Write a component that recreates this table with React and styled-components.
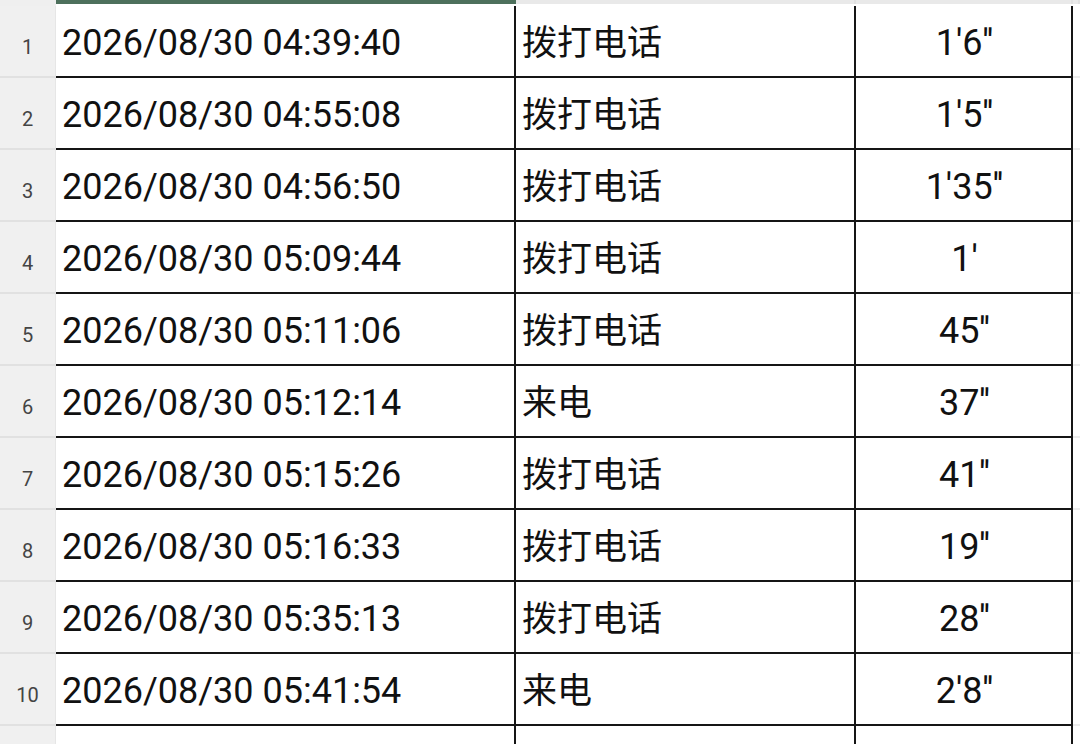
import styled, { createGlobalStyle, css } from 'styled-components';

const GlobalStyle = createGlobalStyle`
  html, body {
    margin: 0;
    padding: 0;
    background: #ffffff;
    overflow: hidden;
  }
`;

const calls = [
  { time: '2026/08/30 04:39:40', type: '拨打电话', duration: `1'6''` },
  { time: '2026/08/30 04:55:08', type: '拨打电话', duration: `1'5''` },
  { time: '2026/08/30 04:56:50', type: '拨打电话', duration: `1'35''` },
  { time: '2026/08/30 05:09:44', type: '拨打电话', duration: `1'` },
  { time: '2026/08/30 05:11:06', type: '拨打电话', duration: `45''` },
  { time: '2026/08/30 05:12:14', type: '来电', duration: `37''` },
  { time: '2026/08/30 05:15:26', type: '拨打电话', duration: `41''` },
  { time: '2026/08/30 05:16:33', type: '拨打电话', duration: `19''` },
  { time: '2026/08/30 05:35:13', type: '拨打电话', duration: `28''` },
  { time: '2026/08/30 05:41:54', type: '来电', duration: `2'8''` },
];

const COLUMNS = '56px 460px 340px 217px 1fr';

const Sheet = styled.div`
  width: 1080px;
  height: 744px;
  overflow: hidden;
  font-family: Roboto, 'Noto Sans CJK SC', sans-serif;
  color: #111;
`;

const HeaderStrip = styled.div`
  display: grid;
  grid-template-columns: ${COLUMNS};
  align-items: start;
  height: 6px;
`;

const HeaderCell = styled.div`
  height: 4px;
  background: #e9e9e9;
  border-right: 2px solid #e0e0e0;
  ${p =>
    p.$selected &&
    css`
      background: #4d705c;
      border-right-color: #4d705c;
    `}
  ${p =>
    p.$corner &&
    css`
      height: 6px;
      background: #efefef;
      border-right: none;
    `}
`;

const Row = styled.div`
  display: grid;
  grid-template-columns: ${COLUMNS};
  height: 72px;
`;

const RowNumber = styled.div`
  display: flex;
  align-items: flex-end;
  justify-content: center;
  padding-bottom: 19px;
  box-sizing: border-box;
  background: #f0f0f0;
  border-bottom: 2px solid #e1e1e1;
  border-right: 1px solid #e6e6e6;
  font-size: 20px;
  line-height: 20px;
  color: #444;
`;

const Cell = styled.div`
  display: flex;
  align-items: center;
  box-sizing: border-box;
  padding: 3px 6px 0;
  border-bottom: 2px solid #151515;
  border-right: 2px solid #151515;
  font-size: 36px;
  white-space: nowrap;
  overflow: hidden;

  ${p =>
    p.$center &&
    css`
      justify-content: center;
      padding-right: 4px;
    `}
  ${p =>
    p.$cjk &&
    css`
      padding-top: 0;
      padding-bottom: 3px;
      font-family: 'Noto Sans CJK SC', sans-serif;
      font-size: 35px;
    `}
  ${p =>
    p.$empty &&
    css`
      border-bottom-color: #ececec;
      border-right: none;
    `}
  ${p =>
    p.$blank &&
    css`
      border-bottom: none;
    `}
`;

function CallRow({ index, call }) {
  return (
    <Row>
      <RowNumber>{index}</RowNumber>
      {call ? (
        <>
          <Cell>{call.time}</Cell>
          <Cell $cjk>{call.type}</Cell>
          <Cell $center>{call.duration}</Cell>
        </>
      ) : (
        <>
          <Cell $blank />
          <Cell $blank />
          <Cell $blank />
        </>
      )}
      <Cell $empty $blank={!call} />
    </Row>
  );
}

export default function App() {
  return (
    <>
      <GlobalStyle />
      <Sheet>
        <HeaderStrip>
          <HeaderCell $corner />
          <HeaderCell $selected />
          <HeaderCell />
          <HeaderCell />
          <HeaderCell />
        </HeaderStrip>
        {calls.map((call, i) => (
          <CallRow key={call.time} index={i + 1} call={call} />
        ))}
        <CallRow />
      </Sheet>
    </>
  );
}
